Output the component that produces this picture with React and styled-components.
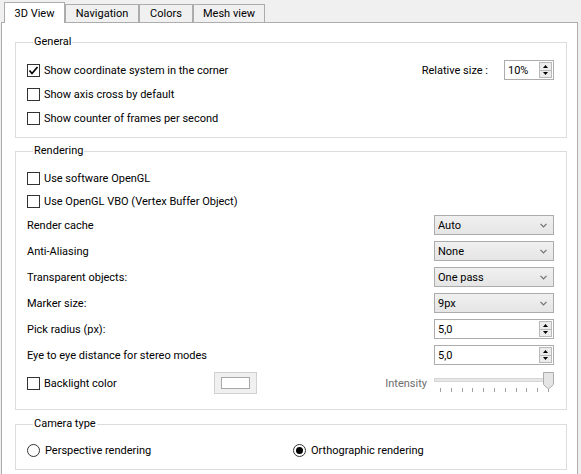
import React from 'react';
import styled, { createGlobalStyle } from 'styled-components';

const Global = createGlobalStyle`
  html, body { margin: 0; padding: 0; background: #f0f0f0; overflow: hidden; }
  body { font-family: Roboto, "Liberation Sans", sans-serif; font-size: 11px; color: #000; }
  * { box-sizing: border-box; }
`;

const Window = styled.div`
  width: 581px;
  height: 474px;
  padding-left: 1px;
  overflow: hidden;
`;

const TabBar = styled.div`
  display: flex;
  align-items: flex-end;
  height: 23px;
  padding-left: 3px;
  margin-bottom: -1px;
  position: relative;
  z-index: 1;
`;

const Tab = styled.div`
  width: ${p => p.$w}px;
  height: ${p => (p.$active ? 21 : 19)}px;
  border: 1px solid #acacac;
  border-bottom: ${p => (p.$active ? 'none' : '1px solid #acacac')};
  background: ${p => (p.$active ? '#ffffff' : '#f0f0f0')};
  display: flex;
  align-items: center;
  justify-content: center;
  padding-top: ${p => (p.$active ? 1 : 0)}px;
  white-space: nowrap;
`;

const Pane = styled.div`
  width: 577px;
  height: 462px;
  border: 1px solid #acacac;
  background: #fff;
  padding: 0 10px 0 13px;
  display: flex;
  flex-direction: column;
`;

const Group = styled.fieldset`
  margin: ${p => p.$mt}px 0 0 0;
  border: 1px solid #dcdcdc;
  padding: ${p => p.$pt}px 12px ${p => p.$pb}px 11px;
  min-width: 0;
  display: flex;
  flex-direction: column;
`;

const Legend = styled.legend`
  margin-left: 6px;
  padding: 0 1px;
  line-height: 16px;
  height: 16px;
`;

const Row = styled.div`
  display: flex;
  align-items: center;
  height: ${p => p.$h || 20}px;
  margin-top: ${p => p.$mt || 0}px;
  white-space: nowrap;
`;

const Label = styled.span`
  flex: 1;
`;

const DimLabel = styled.span`
  color: #6d6d6d;
  margin-right: 7px;
`;

const SideLabel = styled.span`
  margin-right: 16px;
`;

const Spacer = styled.div`
  flex: 1;
`;

const CheckWrap = styled.label`
  display: flex;
  align-items: center;
  width: ${p => (p.$w ? `${p.$w}px` : 'auto')};
`;

const CheckBox = styled.span`
  width: 13px;
  height: 13px;
  border: 1px solid #333333;
  background: #fff;
  margin-right: 4px;
  display: flex;
  align-items: center;
  justify-content: center;
  flex: none;
`;

const RadioCircle = styled.span`
  width: 13px;
  height: 13px;
  border: 1px solid #333333;
  border-radius: 50%;
  background: #fff;
  margin-right: 5px;
  display: flex;
  align-items: center;
  justify-content: center;
  flex: none;
`;

const RadioDot = styled.span`
  width: 7px;
  height: 7px;
  border-radius: 50%;
  background: #000;
`;

const Combo = styled.div`
  width: 120px;
  height: 20px;
  border: 1px solid #acacac;
  background: linear-gradient(#f0f0f0, #e5e5e5);
  display: flex;
  align-items: center;
  padding: 0 6px 0 3px;
`;

const SpinBox = styled.div`
  width: ${p => p.$w}px;
  height: 20px;
  border: 1px solid #acacac;
  background: #fff;
  display: flex;
`;

const SpinValue = styled.span`
  flex: 1;
  display: flex;
  align-items: center;
  padding-left: 3px;
`;

const SpinButtons = styled.div`
  width: 14px;
  padding: 1px 1px 1px 0;
  display: flex;
  flex-direction: column;
`;

const SpinBtn = styled.div`
  flex: 1;
  border: 1px solid #b9b9b9;
  border-top-width: ${p => (p.$down ? 0 : 1)}px;
  background: #ececec;
  display: flex;
  align-items: center;
  justify-content: center;
`;

const ColorButton = styled.div`
  width: 43px;
  height: 22px;
  border: 1px solid #d0d0d0;
  background: #f0f0f0;
  display: flex;
  align-items: center;
  justify-content: center;
`;

const Swatch = styled.div`
  width: 29px;
  height: 12px;
  border: 1px solid #a8a8a8;
  background: #ffffff;
`;

const RadioGrid = styled.div`
  display: grid;
  grid-template-columns: 266px 1fr;
  height: 20px;
  align-items: center;
`;

const Check = ({ checked, w, children }) => (
  <CheckWrap $w={w}>
    <CheckBox>
      {checked && (
        <svg width="11" height="11" viewBox="0 0 11 11">
          <path d="M1.5 5.5 L4 8.5 L9.5 2" fill="none" stroke="#000" strokeWidth="1.7" />
        </svg>
      )}
    </CheckBox>
    <span>{children}</span>
  </CheckWrap>
);

const Radio = ({ checked, children }) => (
  <CheckWrap>
    <RadioCircle>{checked && <RadioDot />}</RadioCircle>
    <span>{children}</span>
  </CheckWrap>
);

const Chevron = () => (
  <svg width="7" height="5" viewBox="0 0 7 5">
    <path d="M0.5 0.8 L3.5 3.8 L6.5 0.8" fill="none" stroke="#707070" strokeWidth="1.2" />
  </svg>
);

const Select = ({ value }) => (
  <Combo>
    <Label>{value}</Label>
    <Chevron />
  </Combo>
);

const Arrow = ({ down }) => (
  <svg width="5" height="3" viewBox="0 0 5 3">
    <path d={down ? 'M0 0 H5 L2.5 3 Z' : 'M0 3 H5 L2.5 0 Z'} fill="#000" />
  </svg>
);

const Spin = ({ value, w }) => (
  <SpinBox $w={w}>
    <SpinValue>{value}</SpinValue>
    <SpinButtons>
      <SpinBtn><Arrow /></SpinBtn>
      <SpinBtn $down><Arrow down /></SpinBtn>
    </SpinButtons>
  </SpinBox>
);

const Slider = () => {
  const ticks = Array.from({ length: 11 }, (_, i) => 6.5 + Math.round(i * 10.8));
  return (
    <svg width="120" height="22" viewBox="0 0 120 22">
      <rect x="0.5" y="6.5" width="118" height="3" fill="#e7e7e7" stroke="#d6d6d6" />
      {ticks.map(x => (
        <line key={x} x1={x} y1="16" x2={x} y2="20" stroke="#a0a0a0" strokeWidth="1" />
      ))}
      <path d="M109.5 0.5 H119.5 V12.5 L114.5 17 L109.5 12.5 Z" fill="#e5e5e5" stroke="#acacac" />
    </svg>
  );
};

export default function App() {
  return (
    <Window>
      <Global />
      <TabBar>
        <Tab $active $w={61}>3D View</Tab>
        <Tab $w={74}>Navigation</Tab>
        <Tab $w={54}>Colors</Tab>
        <Tab $w={72}>Mesh view</Tab>
      </TabBar>
      <Pane>
        <Group $mt={11} $pt={10} $pb={9}>
          <Legend>General</Legend>
          <Row>
            <Check checked>Show coordinate system in the corner</Check>
            <Spacer />
            <SideLabel>Relative size :</SideLabel>
            <Spin value="10%" w={50} />
          </Row>
          <Row $mt={4}>
            <Check>Show axis cross by default</Check>
          </Row>
          <Row $mt={4}>
            <Check>Show counter of frames per second</Check>
          </Row>
        </Group>

        <Group $mt={5} $pt={9} $pb={15}>
          <Legend>Rendering</Legend>
          <Row>
            <Check>Use software OpenGL</Check>
          </Row>
          <Row $mt={3}>
            <Check>Use OpenGL VBO (Vertex Buffer Object)</Check>
          </Row>
          <Row $mt={4}>
            <Label>Render cache</Label>
            <Select value="Auto" />
          </Row>
          <Row $mt={6}>
            <Label>Anti-Aliasing</Label>
            <Select value="None" />
          </Row>
          <Row $mt={6}>
            <Label>Transparent objects:</Label>
            <Select value="One pass" />
          </Row>
          <Row $mt={6}>
            <Label>Marker size:</Label>
            <Select value="9px" />
          </Row>
          <Row $mt={6}>
            <Label>Pick radius (px):</Label>
            <Spin value="5,0" w={120} />
          </Row>
          <Row $mt={6}>
            <Label>Eye to eye distance for stereo modes</Label>
            <Spin value="5,0" w={120} />
          </Row>
          <Row $mt={7} $h={22}>
            <Check w={187}>Backlight color</Check>
            <ColorButton><Swatch /></ColorButton>
            <Spacer />
            <DimLabel>Intensity</DimLabel>
            <Slider />
          </Row>
        </Group>

        <Group $mt={6} $pt={8} $pb={9}>
          <Legend>Camera type</Legend>
          <RadioGrid>
            <Radio>Perspective rendering</Radio>
            <Radio checked>Orthographic rendering</Radio>
          </RadioGrid>
        </Group>
      </Pane>
    </Window>
  );
}
